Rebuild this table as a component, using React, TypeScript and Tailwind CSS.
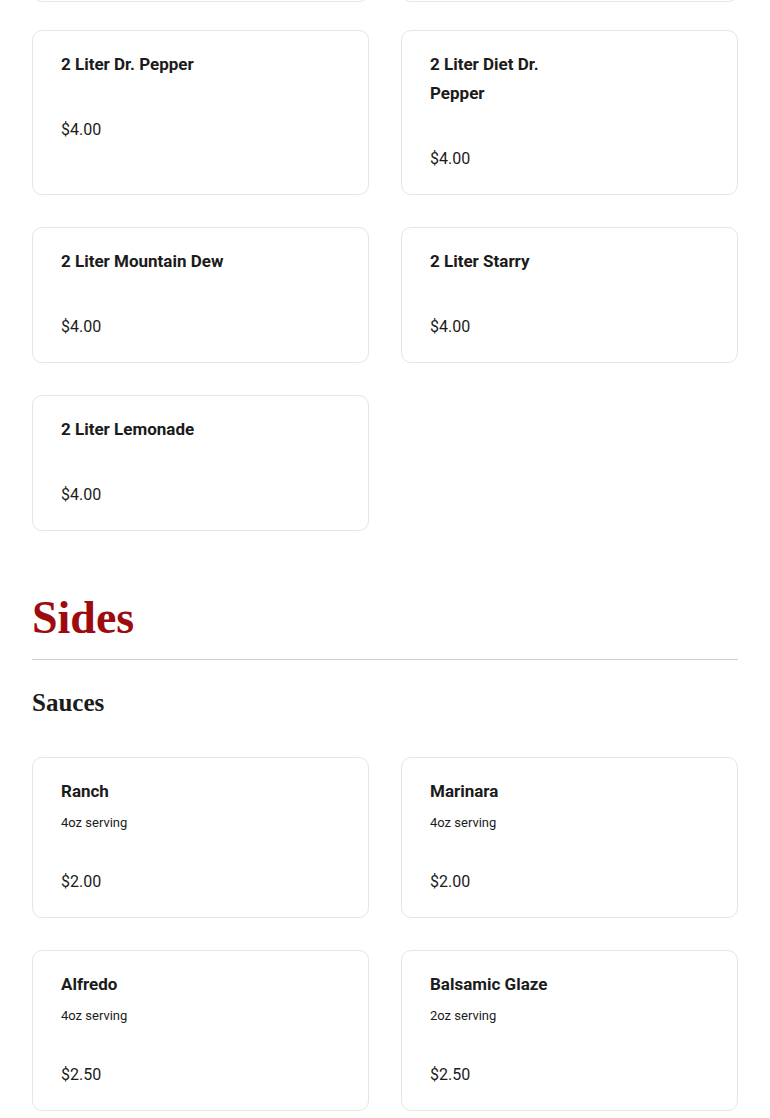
const drinks = [
  { name: "2 Liter Dr. Pepper", price: "$4.00" },
  { name: "2 Liter Diet Dr. Pepper", price: "$4.00" },
  { name: "2 Liter Mountain Dew", price: "$4.00" },
  { name: "2 Liter Starry", price: "$4.00" },
  { name: "2 Liter Lemonade", price: "$4.00" },
];

const sauces = [
  { name: "Ranch", desc: "4oz serving", price: "$2.00" },
  { name: "Marinara", desc: "4oz serving", price: "$2.00" },
  { name: "Alfredo", desc: "4oz serving", price: "$2.50" },
  { name: "Balsamic Glaze", desc: "2oz serving", price: "$2.50" },
];

type Item = { name: string; desc?: string; price: string };

function ItemCard({ item }: { item: Item }) {
  return (
    <div className="rounded-[10px] border border-[#e7e5dc] bg-white px-7 pt-[19px] pb-[21px]">
      <h4 className="max-w-[166px] text-[17px] leading-[29px] font-bold text-[#1b1b1b]">
        {item.name}
      </h4>
      {item.desc && (
        <p className="mt-[7px] text-[13px] leading-5 text-[#1b1b1b]">{item.desc}</p>
      )}
      <p className={`${item.desc ? "mt-[35px]" : "mt-[37px]"} text-[16px] leading-7 text-[#1b1b1b]`}>
        {item.price}
      </p>
    </div>
  );
}

export default function App() {
  return (
    <div className="min-h-screen bg-white px-8 pb-10 font-['Roboto',sans-serif]">
      {/* tail of the previous row */}
      <div className="grid grid-cols-2 gap-8">
        <div className="-mt-[8px] h-[10px] rounded-b-[10px] border border-t-0 border-[#e7e5dc]" />
        <div className="-mt-[8px] h-[10px] rounded-b-[10px] border border-t-0 border-[#e7e5dc]" />
      </div>

      <div className="mt-[28px] grid grid-cols-2 gap-8">
        {drinks.map((d) => (
          <ItemCard key={d.name} item={d} />
        ))}
      </div>

      <section className="mt-[59px]">
        <h2 className="font-['Liberation_Serif',serif] text-[46px] leading-[56px] font-bold text-[#9e0b0f]">
          Sides
        </h2>
        <div className="mt-[13px] border-t border-[#cfcfcf]" />
        <h3 className="mt-[27px] font-['Liberation_Serif',serif] text-[25px] leading-8 font-bold text-[#1b1b1b]">
          Sauces
        </h3>
        <div className="mt-[38px] grid grid-cols-2 gap-8">
          {sauces.map((s) => (
            <ItemCard key={s.name} item={s} />
          ))}
        </div>
      </section>
    </div>
  );
}
